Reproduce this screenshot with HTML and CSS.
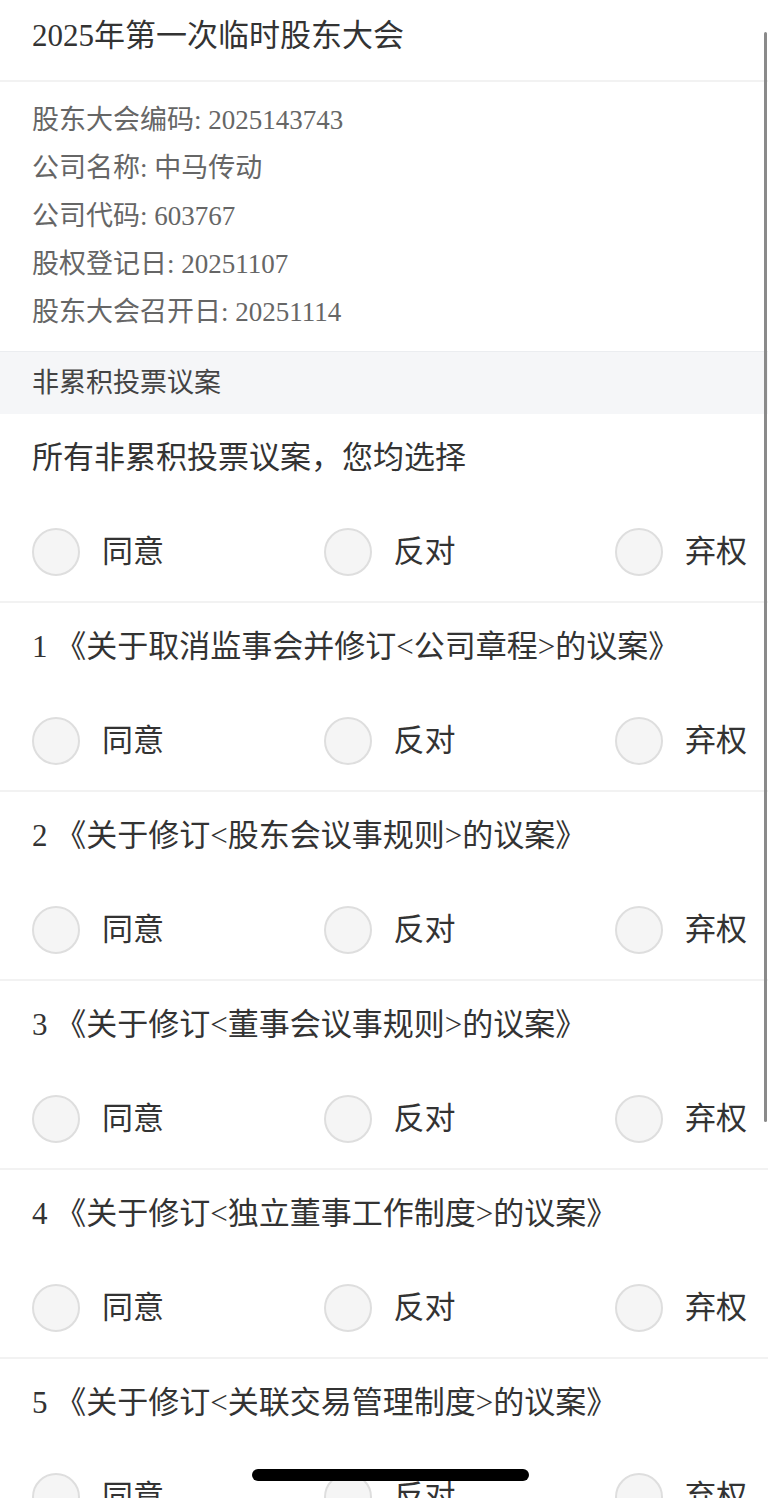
FILE: index.html
```html
<!DOCTYPE html>
<html lang="zh-CN">
<head>
    <meta charset="UTF-8">
    <meta name="viewport" content="width=device-width, initial-scale=1.0">
    <title>2025年第一次临时股东大会</title>
    <link rel="stylesheet" href="styles.css">
</head>
<body>
    <div class="page-title">2025年第一次临时股东大会</div>

    <div class="meeting-info">
        <div>股东大会编码: 2025143743</div>
        <div>公司名称: 中马传动</div>
        <div>公司代码: 603767</div>
        <div>股权登记日: 20251107</div>
        <div>股东大会召开日: 20251114</div>
    </div>

    <div class="section-head">非累积投票议案</div>

    <div class="motion">
        <div class="motion-title">所有非累积投票议案，您均选择</div>
        <div class="choices">
            <label class="choice"><span class="radio"></span>同意</label>
            <label class="choice"><span class="radio"></span>反对</label>
            <label class="choice"><span class="radio"></span>弃权</label>
        </div>
    </div>

    <div class="motion">
        <div class="motion-title">1 《关于取消监事会并修订&lt;公司章程&gt;的议案》</div>
        <div class="choices">
            <label class="choice"><span class="radio"></span>同意</label>
            <label class="choice"><span class="radio"></span>反对</label>
            <label class="choice"><span class="radio"></span>弃权</label>
        </div>
    </div>

    <div class="motion">
        <div class="motion-title">2 《关于修订&lt;股东会议事规则&gt;的议案》</div>
        <div class="choices">
            <label class="choice"><span class="radio"></span>同意</label>
            <label class="choice"><span class="radio"></span>反对</label>
            <label class="choice"><span class="radio"></span>弃权</label>
        </div>
    </div>

    <div class="motion">
        <div class="motion-title">3 《关于修订&lt;董事会议事规则&gt;的议案》</div>
        <div class="choices">
            <label class="choice"><span class="radio"></span>同意</label>
            <label class="choice"><span class="radio"></span>反对</label>
            <label class="choice"><span class="radio"></span>弃权</label>
        </div>
    </div>

    <div class="motion">
        <div class="motion-title">4 《关于修订&lt;独立董事工作制度&gt;的议案》</div>
        <div class="choices">
            <label class="choice"><span class="radio"></span>同意</label>
            <label class="choice"><span class="radio"></span>反对</label>
            <label class="choice"><span class="radio"></span>弃权</label>
        </div>
    </div>

    <div class="motion">
        <div class="motion-title">5 《关于修订&lt;关联交易管理制度&gt;的议案》</div>
        <div class="choices">
            <label class="choice"><span class="radio"></span>同意</label>
            <label class="choice"><span class="radio"></span>反对</label>
            <label class="choice"><span class="radio"></span>弃权</label>
        </div>
    </div>

    <div class="scroll-indicator"></div>
    <div class="home-indicator"></div>
</body>
</html>
```

FILE: styles.css
```css
html, body {
    margin: 0;
    padding: 0;
    background-color: #fff;
    font-family: "Liberation Serif", "Noto Sans CJK SC", serif;
    color: #333;
    overflow: hidden;
}
.page-title {
    padding: 12px 32px 20px;
    font-size: 31px;
    line-height: 48px;
    color: #333;
    border-bottom: 2px solid #f2f2f2;
}
.meeting-info {
    padding: 14px 32px 15px;
    font-size: 27px;
    line-height: 48px;
    color: #666;
}
.section-head {
    height: 62px;
    line-height: 62px;
    padding: 0 32px;
    font-size: 27px;
    color: #444;
    background-color: #f5f6f8;
    border-top: 1px solid #ebedf0;
}
.motion {
    border-bottom: 2px solid #f2f2f2;
}
.motion-title {
    padding: 23px 32px 0;
    font-size: 31px;
    line-height: 42px;
    color: #333;
}
.choices {
    display: flex;
    justify-content: space-between;
    align-items: center;
    padding: 49px 21px 25px 32px;
}
.choice {
    display: flex;
    align-items: center;
    gap: 22px;
    font-size: 31px;
    line-height: 48px;
    color: #333;
}
.radio {
    width: 44px;
    height: 44px;
    border: 2px solid #dedede;
    border-radius: 50%;
    background-color: #f5f5f5;
}
.scroll-indicator {
    position: fixed;
    top: 32px;
    right: 1px;
    width: 3px;
    height: 1090px;
    border-radius: 2px;
    background-color: #8a8a8a;
}
.home-indicator {
    position: fixed;
    left: 252px;
    top: 1469px;
    width: 277px;
    height: 12px;
    border-radius: 6px;
    background-color: #000;
}
```
